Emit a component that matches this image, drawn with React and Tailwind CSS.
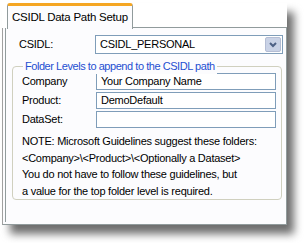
export default function App() {
    return (
        <div className="relative w-[304px] h-[243px] bg-white overflow-hidden font-['Liberation_Sans',Arial,sans-serif] text-[11px] tracking-[-0.25px] text-black">
            {/* drop shadow */}
            <div className="absolute left-[10px] top-[12px] w-[284px] h-[222px] bg-[#6e6e6e] blur-[4px]" />

            <div className="absolute left-[2px] top-[3px] w-[285px] h-[222px] flex flex-col">
                {/* Tab strip */}
                <div className="flex h-[25px] pl-[5px] bg-white">
                    <div className="relative z-10 flex items-center whitespace-nowrap px-[4px] w-[126px] h-[26px] bg-[#fcfcfe] border border-b-0 border-[#919b9c] border-t-[3px] border-t-[#f5a623] rounded-t-[3px] text-[11.5px]">
                        CSIDL Data Path Setup
                    </div>
                    <div className="flex-1 border-b border-[#919b9c]" />
                </div>

                {/* Panel */}
                <div className="flex-1 bg-[#fcfcfe] border-l border-l-[#a0a0a0] border-r border-r-[#919b9c] border-b border-b-[#919b9c] pl-[2px] pr-[2px] pb-[2px]">
                    <div className="h-full border-l border-[#919b9c] pl-[6px] pr-[2px] pt-[7px]">
                        <div className="flex items-center h-[19px] mr-[-1px]">
                            <span className="w-[83px] pl-[7px]">CSIDL:</span>
                            <div className="flex-1 h-[19px] flex items-center border border-[#7f9db9] bg-white pl-[4px] pr-[1px]">
                                <span className="flex-1">CSIDL_PERSONAL</span>
                                <div className="w-[16px] h-[15px] flex items-center justify-center bg-[#c9d2e6] border border-[#b4bdd4] rounded-[2px]">
                                    <svg width="8" height="6" viewBox="0 0 8 6">
                                        <path d="M1 1 L4 4 L7 1" stroke="#4d6185" strokeWidth="2" fill="none" />
                                    </svg>
                                </div>
                            </div>
                        </div>

                        {/* Group box */}
                        <div className="relative mt-[12px] h-[134px] border border-[#d0d0bf] rounded-[4px] pl-[9px] pr-[5px] pt-[6px]">
                            <span className="absolute left-[10px] top-[-9px] bg-[#fcfcfe] px-[2px] text-[#1f4fd1] leading-[16px] tracking-[-0.45px] whitespace-nowrap">
                                Folder Levels to append to the CSIDL path
                            </span>
                            <div className="flex flex-col gap-[2px]">
                                <div className="flex items-center h-[17px]">
                                    <span className="w-[74px]">Company</span>
                                    <div className="flex-1 h-[17px] border border-[#7f9db9] bg-white pl-[4px] leading-[15px]">
                                        Your Company Name
                                    </div>
                                </div>
                                <div className="flex items-center h-[17px]">
                                    <span className="w-[74px]">Product:</span>
                                    <div className="flex-1 h-[17px] border border-[#7f9db9] bg-white pl-[4px] leading-[15px]">
                                        DemoDefault
                                    </div>
                                </div>
                                <div className="flex items-center h-[17px]">
                                    <span className="w-[74px]">DataSet:</span>
                                    <div className="flex-1 h-[17px] border border-[#7f9db9] bg-white" />
                                </div>
                            </div>
                            <div className="mt-[5px] leading-[16.5px] whitespace-nowrap">
                                <p>NOTE: Microsoft Guidelines suggest these folders:</p>
                                <p>&lt;Company&gt;\&lt;Product&gt;\&lt;Optionally a Dataset&gt;</p>
                                <p>You do not have to follow these guidelines, but</p>
                                <p>a value for the top folder level is required.</p>
                            </div>
                        </div>
                    </div>
                </div>
            </div>
        </div>
    );
}
